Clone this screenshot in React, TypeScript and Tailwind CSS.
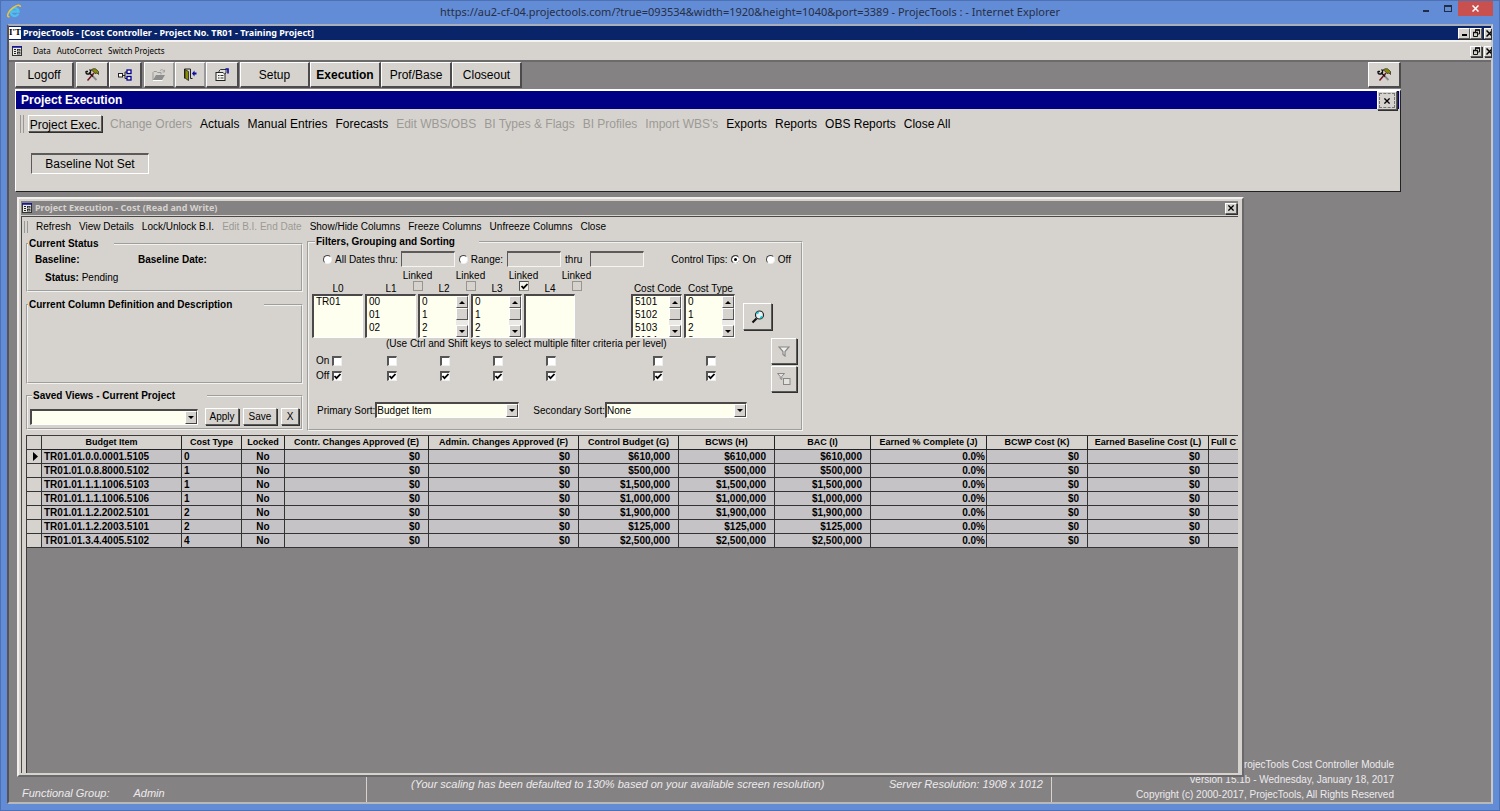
import { useState } from "react";
import type { ReactNode } from "react";
import clsx from "clsx";

const raised = "border border-t-white border-l-white border-r-[#5a5a5a] border-b-[#5a5a5a] shadow-[1px_1px_0_#303030]";
const sunken = "border border-t-[#5c5a5a] border-l-[#5c5a5a] border-r-[#f4f4f0] border-b-[#f4f4f0]";
const groove = "border-2 [border-style:groove] border-[#f2f2f0] min-w-0";

const columns = [
  { title: "Budget Item", width: "w-[140px]", cell: "text-left pl-[2px]" },
  { title: "Cost Type", width: "w-[60px]", cell: "text-left pl-[2px]" },
  { title: "Locked", width: "w-[43px]", cell: "text-center" },
  { title: "Contr. Changes Approved (E)", width: "w-[144px]", cell: "text-right pr-2" },
  { title: "Admin. Changes Approved (F)", width: "w-[150px]", cell: "text-right pr-2" },
  { title: "Control Budget (G)", width: "w-[100px]", cell: "text-right pr-2" },
  { title: "BCWS (H)", width: "w-[96px]", cell: "text-right pr-2" },
  { title: "BAC (I)", width: "w-[96px]", cell: "text-right pr-2" },
  { title: "Earned % Complete (J)", width: "w-[116px]", cell: "text-right pr-px" },
  { title: "BCWP Cost (K)", width: "w-[101px]", cell: "text-right pr-2" },
  { title: "Earned Baseline Cost (L)", width: "w-[121px]", cell: "text-right pr-2" },
  { title: "Full C", width: "border-r-0", cell: "border-r-0" },
];

const items = [
  { id: "TR01.01.0.0.0001.5105", type: "0", amount: "$610,000" },
  { id: "TR01.01.0.8.8000.5102", type: "1", amount: "$500,000" },
  { id: "TR01.01.1.1.1006.5103", type: "1", amount: "$1,500,000" },
  { id: "TR01.01.1.1.1006.5106", type: "1", amount: "$1,000,000" },
  { id: "TR01.01.1.2.2002.5101", type: "2", amount: "$1,900,000" },
  { id: "TR01.01.1.2.2003.5101", type: "2", amount: "$125,000" },
  { id: "TR01.01.3.4.4005.5102", type: "4", amount: "$2,500,000" },
];

const panelMenu = [
  { label: "Change Orders", off: true },
  { label: "Actuals" },
  { label: "Manual Entries" },
  { label: "Forecasts" },
  { label: "Edit WBS/OBS", off: true },
  { label: "BI Types & Flags", off: true },
  { label: "BI Profiles", off: true },
  { label: "Import WBS's", off: true },
  { label: "Exports" },
  { label: "Reports" },
  { label: "OBS Reports" },
  { label: "Close All" },
];

const formMenu = [
  { label: "Refresh" },
  { label: "View Details" },
  { label: "Lock/Unlock B.I." },
  { label: "Edit B.I. End Date", off: true },
  { label: "Show/Hide Columns" },
  { label: "Freeze Columns" },
  { label: "Unfreeze Columns" },
  { label: "Close" },
];

function ToolsIcon() {
  return (
    <svg width="14" height="14" viewBox="0 0 14 14" fill="none">
      <path d="M2.500 12.500 L9 5" stroke="#7a1020" strokeWidth="1.500" />
      <path d="M7 7.500 L11.500 12" stroke="#8a8a8a" strokeWidth="1.800" />
      <path d="M4 4.500 L8 8.500" stroke="#111" strokeWidth="1.400" />
      <path d="M1 3 V5 L2 6 H4 L5.500 4.500 V2.500 L4.500 1.500 M3 3.500 H1" stroke="#111" strokeWidth="1.300" />
      <path d="M6 2 L8 .8 H10.500 L13.500 3.500 V6.500 L12 5 L10 5.500 L8.500 3.500 Z" fill="#8c8c00" stroke="#222" strokeWidth=".7" />
    </svg>
  );
}

function TreeIcon() {
  return (
    <svg width="14" height="12" viewBox="0 0 14 12" fill="none">
      <path d="M4 6.500 H7 M7 3 V9.500 M7 3 H9 M7 9.500 H9" stroke="#222" />
      <rect x=".5" y="4.500" width="4" height="3.500" fill="#fff" stroke="#222" />
      <rect x="9" y="1" width="4" height="3.500" fill="#fff" stroke="#000090" strokeWidth="1.300" />
      <rect x="9" y="7.500" width="4" height="3.500" fill="#fff" stroke="#000090" strokeWidth="1.300" />
    </svg>
  );
}

function FolderIcon() {
  return (
    <svg width="14" height="12" viewBox="0 0 14 12" fill="none">
      <path d="M1 11 V3.500 L2 2.500 H4.500 L5.500 3.500 H9 V5.500" stroke="#999" />
      <path d="M1 11 L4 6 H13 L10 11 Z" fill="#8d8d8d" />
      <path d="M8 1.500 C9.500 .2 11.500 .5 12 2.500 M12.500 .8 V3 H10.500" stroke="#999" strokeWidth=".8" />
      <path d="M1 11.500 H10.500" stroke="#fff" />
    </svg>
  );
}

function DoorIcon() {
  return (
    <svg width="14" height="13" viewBox="0 0 14 13" fill="none">
      <path d="M1.500 10.500 V1 H7.500 V10.500 H9.500" stroke="#222" />
      <path d="M2 1.500 L5.500 3.500 V12.500 L2 10 Z" fill="#8c8c00" stroke="#222" strokeWidth=".8" />
      <path d="M9 5.500 L11.500 2.500 V4.500 H13.500 V6.500 H11.500 V8.500 Z" fill="#0a0aa0" />
    </svg>
  );
}

function PropertiesIcon() {
  return (
    <svg width="14" height="13" viewBox="0 0 14 13" fill="none">
      <rect x="1" y="4.500" width="9" height="8" fill="#f4f4f0" stroke="#222" />
      <path d="M4 4.500 V3 L5.500 1.500 H11 V5 L9.500 6 L8 4.500 Z" fill="#ddd" stroke="#222" strokeWidth=".9" />
      <path d="M10.500 1 H13 V5.500" stroke="#0a0aa0" strokeWidth="1.600" />
      <path d="M3 7.500 H4.500 M5.500 7.500 H8.500 M3 10 H4.500 M5.500 10 H8.500" stroke="#333" strokeWidth="1" />
    </svg>
  );
}

function FormIcon() {
  return (
    <svg className="shrink-0" width="10" height="10" viewBox="0 0 10 10" fill="none">
      <rect x=".5" y=".5" width="9" height="9" fill="#e8e8e4" stroke="#333" />
      <path d="M0 1 H10" stroke="#1010a0" strokeWidth="1.500" />
      <path d="M2 3.500 H4 M2 5.500 H4 M2 7.500 H4" stroke="#222" />
      <rect x="5.500" y="3.500" width="2.500" height="1.500" stroke="#222" strokeWidth=".8" />
      <rect x="5.500" y="6.500" width="2.500" height="1.500" stroke="#222" strokeWidth=".8" />
    </svg>
  );
}

function BrowserLogo() {
  return (
    <svg width="15" height="15" viewBox="0 0 15 15" fill="none">
      <path d="M11.300 9.600 A4 4 0 1 1 11.600 7.500 H4" stroke="#4cc0ee" strokeWidth="2.300" />
      <path d="M2.500 12.800 C-1.500 13.500 1.500 6.500 6.500 3.300 C10 1 13.500 .2 13.300 3" stroke="#f0c435" strokeWidth="1.500" />
    </svg>
  );
}

function Cross({ size = 7 }: { size?: number }) {
  return (
    <svg className="shrink-0" width={size} height={size} viewBox="0 0 7 7" stroke="currentColor" strokeWidth="1.500">
      <path d="M.5 .5 L6.500 6.500 M6.500 .5 L.5 6.500" />
    </svg>
  );
}

function RestoreIcon() {
  return (
    <svg width="7" height="8" viewBox="0 0 7 8" fill="none" stroke="#111">
      <path d="M2.500 3 V1 H6.500 V5 H5" />
      <path d="M.5 3.500 H4.500 V7.500 H.5 Z" />
      <path d="M2 1 H7 M0 3.500 H5" strokeWidth="1.500" />
    </svg>
  );
}

function WindowButton({ label, wide = true, children }: { label: string; wide?: boolean; children: ReactNode }) {
  return (
    <button
      aria-label={label}
      className={clsx("flex h-[11px] items-center overflow-hidden bg-[#d6d3ce] text-black", raised, wide ? "w-3 justify-center" : "w-[7px] border-r-0 pl-px")}
    >
      {children}
    </button>
  );
}

function ToolButton({ className, label, children }: { className: string; label?: string; children: ReactNode }) {
  return (
    <button
      aria-label={label}
      className={clsx("flex h-[26px] items-center justify-center border-t border-l border-r-2 border-b-2 border-t-white border-l-white border-r-[#4c4a4c] border-b-[#4c4a4c] bg-[#d6d3ce] text-[12px]", className)}
    >
      {children}
    </button>
  );
}

function Tick({ label, checked = false, muted = false }: { label: string; checked?: boolean; muted?: boolean }) {
  const [on, setOn] = useState(checked);
  return (
    <span className="relative inline-flex h-[10px] w-[10px]">
      <input
        type="checkbox"
        aria-label={label}
        checked={on}
        onChange={() => setOn(!on)}
        className={clsx(
          "h-[10px] w-[10px] appearance-none",
          muted ? "border border-[#98958f] bg-[#d6d3ce]" : "border-t-2 border-l-2 border-r border-b border-t-[#555] border-l-[#555] border-r-[#eee] border-b-[#eee] bg-white",
          muted && on && "border-t-[#555] border-l-[#555] bg-[#f4f4ee]"
        )}
      />
      {on && (
        <svg className="pointer-events-none absolute top-px left-px" width="9" height="9" viewBox="0 0 9 9" fill="none" stroke="#000" strokeWidth="1.800">
          <path d="M1.500 4 L3.500 6.200 L7.500 2" />
        </svg>
      )}
    </span>
  );
}

function Radio({ name, label, defaultChecked }: { name: string; label: string; defaultChecked?: boolean }) {
  return (
    <label className="flex items-center gap-[3px]">
      <input
        type="radio"
        name={name}
        defaultChecked={defaultChecked}
        className="h-[9px] w-[9px] appearance-none rounded-full border border-t-[#444] border-l-[#444] border-r-[#eee] border-b-[#eee] bg-white checked:bg-black checked:shadow-[inset_0_0_0_2px_white]"
      />
      {label}
    </label>
  );
}

function Arrow({ up = false }: { up?: boolean }) {
  return (
    <svg width="6" height="3" viewBox="0 0 6 3" fill="#000">
      <path d={up ? "M0 3 L3 0 L6 3 Z" : "M0 0 L3 3 L6 0 Z"} />
    </svg>
  );
}

function ListBox({ label, options, scroll = false }: { label: string; options: string[]; scroll?: boolean }) {
  const key = "h-3 border border-t-white border-l-white border-r-[#555] border-b-[#555] bg-[#d6d3ce]";
  return (
    <div className="mr-[2px] flex h-11 w-[51px] overflow-hidden border-t-2 border-l-2 border-r border-b border-t-[#4a4848] border-l-[#4a4848] border-r-white border-b-white bg-[#fffff0]">
      <select
        multiple
        aria-label={label}
        className="h-[41px] min-w-0 flex-1 appearance-none overflow-hidden bg-transparent p-0 [scrollbar-width:none]"
      >
        {options.map((o) => (
          <option key={o} className="h-[13px] min-h-0 p-0 pl-[2px] text-[10px] leading-[13px]">{o}</option>
        ))}
      </select>
      {scroll && (
        <div className="flex w-3 flex-col bg-[#ebe9e5]">
          <button aria-label={label + " up"} className={clsx(key, "flex items-center justify-center")}>
            <Arrow up />
          </button>
          <div className={key} />
          <button aria-label={label + " down"} className={clsx(key, "mt-auto flex items-center justify-center")}>
            <Arrow />
          </button>
        </div>
      )}
    </div>
  );
}

function DropDown({ id, options, className }: { id: string; options: string[]; className: string }) {
  return (
    <div className={clsx("relative h-4 border-t-2 border-l-2 border-r border-b border-t-[#4a4848] border-l-[#4a4848] border-r-white border-b-white bg-[#fffff0]", className)}>
      <select id={id} aria-label={id} className="block h-[13px] w-full appearance-none bg-transparent text-[10px] leading-[13px]">
        {options.map((o) => (
          <option key={o}>{o}</option>
        ))}
      </select>
      <span className="pointer-events-none absolute top-0 right-0 flex h-[13px] w-3 items-center justify-center border border-t-white border-l-white border-r-[#444] border-b-[#444] bg-[#d6d3ce]">
        <Arrow />
      </span>
    </div>
  );
}

function Grip() {
  return (
    <span className="flex gap-[2px]">
      <span className="w-px bg-[#9a9894]" />
      <span className="w-px bg-[#9a9894]" />
    </span>
  );
}

function LeftForms() {
  return (
    <div className="w-[277px] pt-[2px]">
      <fieldset className={clsx(groove, "h-[54px]")}>
        <legend className="pr-4 pl-px font-bold leading-3">Current Status</legend>
        <div className="grid grid-cols-[103px_1fr] gap-y-[6px] pt-1 pl-[7px] leading-3">
          <b>Baseline:</b>
          <b>Baseline Date:</b>
          <span className="pl-[10px]"><b>Status:</b> Pending</span>
        </div>
      </fieldset>
      <fieldset className={clsx(groove, "mt-[7px] h-[85px]")}>
        <legend className="pr-8 pl-px font-bold leading-3">Current Column Definition and Description</legend>
      </fieldset>
      <fieldset className={clsx(groove, "mt-[6px] h-10")}>
        <legend className="ml-1 pr-8 pl-px font-bold leading-3">Saved Views - Current Project</legend>
        <div className="flex items-center gap-1 pt-[6px] pl-[2px]">
          <DropDown id="Saved view" options={[""]} className="mr-[3px] w-[168px]" />
          <button className={clsx(raised, "h-[17px] w-[34px]")}>Apply</button>
          <button className={clsx(raised, "h-[17px] w-[34px]")}>Save</button>
          <button className={clsx(raised, "h-[17px] w-[18px]")}>X</button>
        </div>
      </fieldset>
    </div>
  );
}

function CheckRow({ label, checked }: { label: string; checked?: boolean }) {
  return (
    <div className="flex h-3 items-center">
      <span className="flex w-[53px] items-center">
        <span className="w-[17px] pl-1">{label}</span>
        <span className="ml-[3px] flex"><Tick label={"L0 " + label} checked={checked} /></span>
      </span>
      {["L1", "L2", "L3", "L4"].map((l) => (
        <span key={l} className="flex w-[53px] justify-center"><Tick label={l + " " + label} checked={checked} /></span>
      ))}
      <span className="ml-[54px] flex w-[53px] justify-center"><Tick label={"Cost Code " + label} checked={checked} /></span>
      <span className="flex w-[53px] justify-center"><Tick label={"Cost Type " + label} checked={checked} /></span>
    </div>
  );
}

function Filters() {
  const dateBox = clsx(sunken, "h-4 w-[54px] border-t-2 bg-[#d6d3ce]");
  const button = clsx(raised, "flex items-center justify-center");
  return (
    <fieldset className={clsx(groove, "h-[195px] w-[496px]")}>
      <legend className="ml-[6px] pr-6 pl-px font-bold leading-3">Filters, Grouping and Sorting</legend>
      <div className="mt-[3px] flex h-4 items-center pl-[14px]">
        <Radio name="dates" label="All Dates thru:" />
        <input aria-label="All dates thru" className={clsx(dateBox, "ml-[3px]")} />
        <span className="ml-1"><Radio name="dates" label="Range:" /></span>
        <input aria-label="Range start" className={clsx(dateBox, "ml-1")} />
        <label htmlFor="range-end" className="ml-1">thru</label>
        <input id="range-end" className={clsx(dateBox, "ml-2")} />
        <span className="ml-auto">Control Tips:</span>
        <div className="mr-[10px] ml-[3px] flex gap-[10px]">
          <Radio name="tips" label="On" defaultChecked />
          <Radio name="tips" label="Off" />
        </div>
      </div>
      <div className="mt-1 flex pl-[3px]">
        <div className="w-[425px] shrink-0 leading-[10px]">
          <div className="flex h-[23px] items-end text-center">
            <span className="w-[52px]">L0</span>
            <span className="w-[15px]" />
            {["L1", "L2", "L3", "L4"].map((l) => (
              <span key={l} className="flex items-end">
                <span className="w-6">{l}</span>
                <span className="flex h-[23px] w-[29px] flex-col items-center">
                  Linked
                  <Tick label={l + " linked"} checked={l === "L3"} muted />
                </span>
              </span>
            ))}
            <span className="ml-10 w-[53px] whitespace-nowrap">Cost Code</span>
            <span className="w-[53px] whitespace-nowrap">Cost Type</span>
          </div>
          <div className="flex">
            <ListBox label="L0" options={["TR01"]} />
            <ListBox label="L1" options={["00", "01", "02"]} />
            <ListBox label="L2" options={["0", "1", "2", "3"]} scroll />
            <ListBox label="L3" options={["0", "1", "2", "3"]} scroll />
            <ListBox label="L4" options={[]} />
            <span className="w-[54px]" />
            <ListBox label="Cost Code" options={["5101", "5102", "5103", "5104"]} scroll />
            <ListBox label="Cost Type" options={["0", "1", "2", "3"]} scroll />
          </div>
          <p className="pl-[74px] leading-3">(Use Ctrl and Shift keys to select multiple filter criteria per level)</p>
          <div className="mt-[5px] flex flex-col gap-[3px]">
            <CheckRow label="On" />
            <CheckRow label="Off" checked />
          </div>
        </div>
        <div className="ml-[6px] flex w-[54px] flex-col items-end pt-8">
          <button aria-label="Find" className={clsx(button, "h-[27px] w-[29px] self-start")}>
            <svg width="14" height="14" viewBox="0 0 14 14" fill="none">
              <circle cx="8.500" cy="5" r="4" fill="#e8f4f4" stroke="#222" strokeWidth="1.200" />
              <path d="M6 3.500 L7.500 2 M9.500 8 L11 6.500" stroke="#00d0e0" strokeWidth="1.800" />
              <path d="M5.500 8.500 L1.500 12.500" stroke="#111" strokeWidth="2.200" />
            </svg>
          </button>
          <button aria-label="Apply filter" className={clsx(button, "mt-2 h-[26px] w-[26px]")}>
            <svg width="12" height="11" viewBox="0 0 12 11" fill="#efefec" stroke="#888" strokeWidth="1.200">
              <path d="M1 1 H11 L7 5.500 V10 L5 8.500 V5.500 Z" />
            </svg>
          </button>
          <button aria-label="Filter by form" className={clsx(button, "mt-[2px] h-[26px] w-[26px]")}>
            <svg width="14" height="12" viewBox="0 0 14 12" fill="#e4e2de" stroke="#888">
              <path d="M.5 .5 H7.500 L4.800 3.500 V6.500 L3.200 5.500 V3.500 Z" />
              <rect x="6.500" y="5.500" width="6.500" height="6" />
            </svg>
          </button>
        </div>
      </div>
      <div className="mt-[10px] flex h-4 items-center pl-2">
        <label htmlFor="Primary Sort">Primary Sort:</label>
        <DropDown id="Primary Sort" options={["Budget Item", "Cost Type"]} className="w-36" />
        <label htmlFor="Secondary Sort" className="ml-[14px]">Secondary Sort:</label>
        <DropDown id="Secondary Sort" options={["None", "Cost Type"]} className="w-[142px]" />
      </div>
    </fieldset>
  );
}

function CostTable() {
  return (
    <div className="ml-1 min-h-0 flex-1 overflow-hidden border-t border-l border-[#3c3a3c] bg-[#858284]">
      <table className="w-full table-fixed border-separate border-spacing-0 font-bold leading-[13px]">
        <thead>
          <tr className="h-[14px] bg-[#d6d3ce] text-[9px]">
            <th className="w-[15px] border-r border-b border-[#333] p-0" />
            {columns.map((c) => (
              <th key={c.title} className={clsx("border-r border-b border-[#222] p-0 whitespace-nowrap", c.width)}>{c.title}</th>
            ))}
          </tr>
        </thead>
        <tbody>
          {items.map((item, i) => {
            const values = [item.id, item.type, "No", "$0", "$0", item.amount, item.amount, item.amount, "0.0%", "$0", "$0", ""];
            return (
              <tr key={item.id} className="h-[14px] bg-[#c6c3c6]">
                <td className="border-r border-b border-[#333] bg-[#d6d3ce] p-0">
                  {i === 0 && (
                    <svg className="ml-[6px]" width="5" height="9" viewBox="0 0 5 9"><path d="M0 0 L5 4.500 L0 9 Z" /></svg>
                  )}
                </td>
                {values.map((v, n) => (
                  <td key={n} className={clsx("border-r border-b border-[#333] py-0", columns[n].cell)}>{v}</td>
                ))}
              </tr>
            );
          })}
        </tbody>
      </table>
    </div>
  );
}

export default function App() {
  return (
    <div className="flex h-screen flex-col overflow-hidden border border-[#4d71b2] bg-[#628cd6] px-[6px] pb-[6px] font-['Liberation_Sans',Arial,sans-serif] text-[10px] whitespace-nowrap text-black">
      <header className="relative flex h-[23px] shrink-0 items-center justify-center">
        <span className="absolute top-[3px] left-0"><BrowserLogo /></span>
        <h1 className="font-['Noto_Sans',sans-serif] text-[11px] text-[#262f45]">
          https://au2-cf-04.projectools.com/?true=093534&amp;width=1920&amp;height=1040&amp;port=3389 - ProjecTools : - Internet Explorer
        </h1>
        <div className="absolute top-0 right-0 flex h-[15px] items-center text-[#222c44]">
          <button aria-label="Minimize" className="mt-1 mr-[15px] h-[2px] w-[6px] bg-[#222c44]" />
          <button aria-label="Maximize" className="mr-[6px] h-[7px] w-2 border border-t-2 border-[#222c44]" />
          <button aria-label="Close" className="flex h-[15px] w-[35px] items-center justify-center bg-[#c8504f] text-white"><Cross /></button>
        </div>
      </header>

      <main className="flex min-h-0 flex-1 flex-col border-2 border-t-[#a9aebb] border-r-[#c8c8c8] border-b-[#b8b8b8] border-l-[#55535a] bg-[#858284]">
        <div className="flex h-[14px] shrink-0 items-center bg-[#0a246a] text-white">
          <span className="flex h-3 w-3 items-center justify-center bg-white font-['Liberation_Serif',serif] text-[9px] font-bold text-black">I'T</span>
          <h2 className="ml-[2px] font-['Noto_Sans',sans-serif] text-[9px] font-bold">ProjecTools - [Cost Controller - Project No. TR01 - Training Project]</h2>
          <div className="ml-auto flex">
            <WindowButton label="Minimize app"><span className="mt-1 h-[2px] w-[5px] bg-black" /></WindowButton>
            <WindowButton label="Restore app"><RestoreIcon /></WindowButton>
            <span className="w-[2px]" />
            <WindowButton label="Close app" wide={false}><Cross /></WindowButton>
          </div>
        </div>
        <nav className="flex h-[22px] shrink-0 items-center border-t-2 border-b-2 border-t-[#f4f3f0] border-b-[#6c6a6c] bg-[#d6d3ce] pl-[3px] font-['Noto_Sans',sans-serif] text-[8px]">
          <FormIcon />
          <button className="ml-[11px]">Data</button>
          <button className="ml-[6px]">AutoCorrect</button>
          <button className="ml-[6px]">Switch Projects</button>
          <div className="ml-auto flex">
            <WindowButton label="Restore form"><RestoreIcon /></WindowButton>
            <span className="w-[2px]" />
            <WindowButton label="Close form" wide={false}><Cross /></WindowButton>
          </div>
        </nav>

        <div className="relative flex min-h-0 flex-1 flex-col pl-[6px]">
          <div className="mr-[90px] flex shrink-0">
            <ToolButton className="mr-[2px] w-[59px]">Logoff</ToolButton>
            <ToolButton className="w-[33px]" label="Tools"><ToolsIcon /></ToolButton>
            <ToolButton className="mr-[2px] w-[33px]" label="Structure"><TreeIcon /></ToolButton>
            <ToolButton className="w-[31px] border-r-[#999]" label="Open"><FolderIcon /></ToolButton>
            <ToolButton className="w-[31px] border-r-[#999]" label="Exit"><DoorIcon /></ToolButton>
            <ToolButton className="mr-px w-[33px]" label="Properties"><PropertiesIcon /></ToolButton>
            <ToolButton className="w-[70px]">Setup</ToolButton>
            <ToolButton className="w-[71px] text-[11px] font-bold">Execution</ToolButton>
            <ToolButton className="w-[71px]">Prof/Base</ToolButton>
            <ToolButton className="w-[70px]">Closeout</ToolButton>
            <ToolButton className="ml-auto w-[33px]" label="Options"><ToolsIcon /></ToolButton>
          </div>

          <section className="mt-px mr-[90px] h-[103px] shrink-0 border border-t-2 border-t-white border-l-white border-r-[#222] border-b-[#222] bg-[#d6d3ce]">
            <div className="flex h-[18px] items-start bg-[#000084] text-white">
              <h2 className="flex-1 pl-[5px] text-[12px] leading-[18px] font-bold">Project Execution</h2>
              <button aria-label="Close panel" className={clsx(raised, "mr-[2px] h-[19px] w-5 bg-[#d6d3ce] p-px text-black")}>
                <span className="flex h-full items-center justify-center border border-dashed border-[#777]"><Cross size={6} /></span>
              </button>
              <span className="h-[19px] w-px bg-[#d6d3ce]" />
            </div>
            <nav className="mt-[6px] flex h-[18px] gap-2 pl-1 text-[12px]">
              <div className="flex gap-1">
                <Grip />
                <button className={clsx(raised, "mb-px w-[74px]")}>Project Exec.</button>
              </div>
              {panelMenu.map((m) => (
                <button key={m.label} disabled={m.off} className={clsx(m.off && "text-[#9c9a96]")}>{m.label}</button>
              ))}
            </nav>
            <div className="mt-5 ml-[15px] flex h-[21px] w-[118px] items-center justify-center border-t-2 border-l border-r border-b border-t-[#5c5a5a] border-l-[#5c5a5a] border-r-white border-b-white text-[12px]">
              Baseline Not Set
            </div>
          </section>

          <section className="z-10 mt-[5px] mr-[247px] mb-[25px] ml-[2px] flex min-h-0 flex-1 flex-col border-2 border-t-[#f1f0ed] border-l-[#f1f0ed] border-r-[#6a686a] border-b-[#6a686a] bg-[#d6d3ce] p-[2px] pr-1">
            <div className="flex h-[14px] shrink-0 items-center bg-[#858284] pr-px pl-px">
              <FormIcon />
              <h3 className="ml-[3px] flex-1 font-['Noto_Sans',sans-serif] text-[9px] font-bold text-[#d6d3ce]">Project Execution - Cost (Read and Write)</h3>
              <WindowButton label="Close cost form"><Cross size={6} /></WindowButton>
            </div>
            <div className="mt-px flex min-h-0 flex-1 flex-col border-t border-l border-[#4a4848]">
              <nav className="flex h-[19px] shrink-0 items-center gap-2 pl-[2px]">
                <span className="flex h-3"><Grip /></span>
                {formMenu.map((m) => (
                  <button key={m.label} disabled={m.off} className={clsx(m.off && "text-[#9c9a96]")}>{m.label}</button>
                ))}
              </nav>
              <div className="flex h-[199px] shrink-0 gap-1 pl-1">
                <LeftForms />
                <Filters />
              </div>
              <CostTable />
            </div>
          </section>

          <footer className="absolute inset-x-0 bottom-0 flex h-12 items-end text-[11px] text-[#ecebec]">
            <div className="flex h-[26px] w-[358px] items-end border-r border-[#d6d3ce] pb-px pl-[13px] italic">
              Functional Group: <span className="ml-6">Admin</span>
            </div>
            <div className="flex h-[26px] w-[685px] justify-between border-r border-[#d6d3ce] pr-2 pl-11 leading-4 italic">
              <span>(Your scaling has been defaulted to 130% based on your available screen resolution)</span>
              <span>Server Resolution: 1908 x 1012</span>
            </div>
            <div className="flex-1 pr-[97px] text-right text-[10px] leading-[15px]">
              <p>ProjecTools Cost Controller Module</p>
              <p>Version 15.1b - Wednesday, January 18, 2017</p>
              <p>Copyright (c) 2000-2017, ProjecTools, All Rights Reserved</p>
            </div>
          </footer>
        </div>
      </main>
    </div>
  );
}
